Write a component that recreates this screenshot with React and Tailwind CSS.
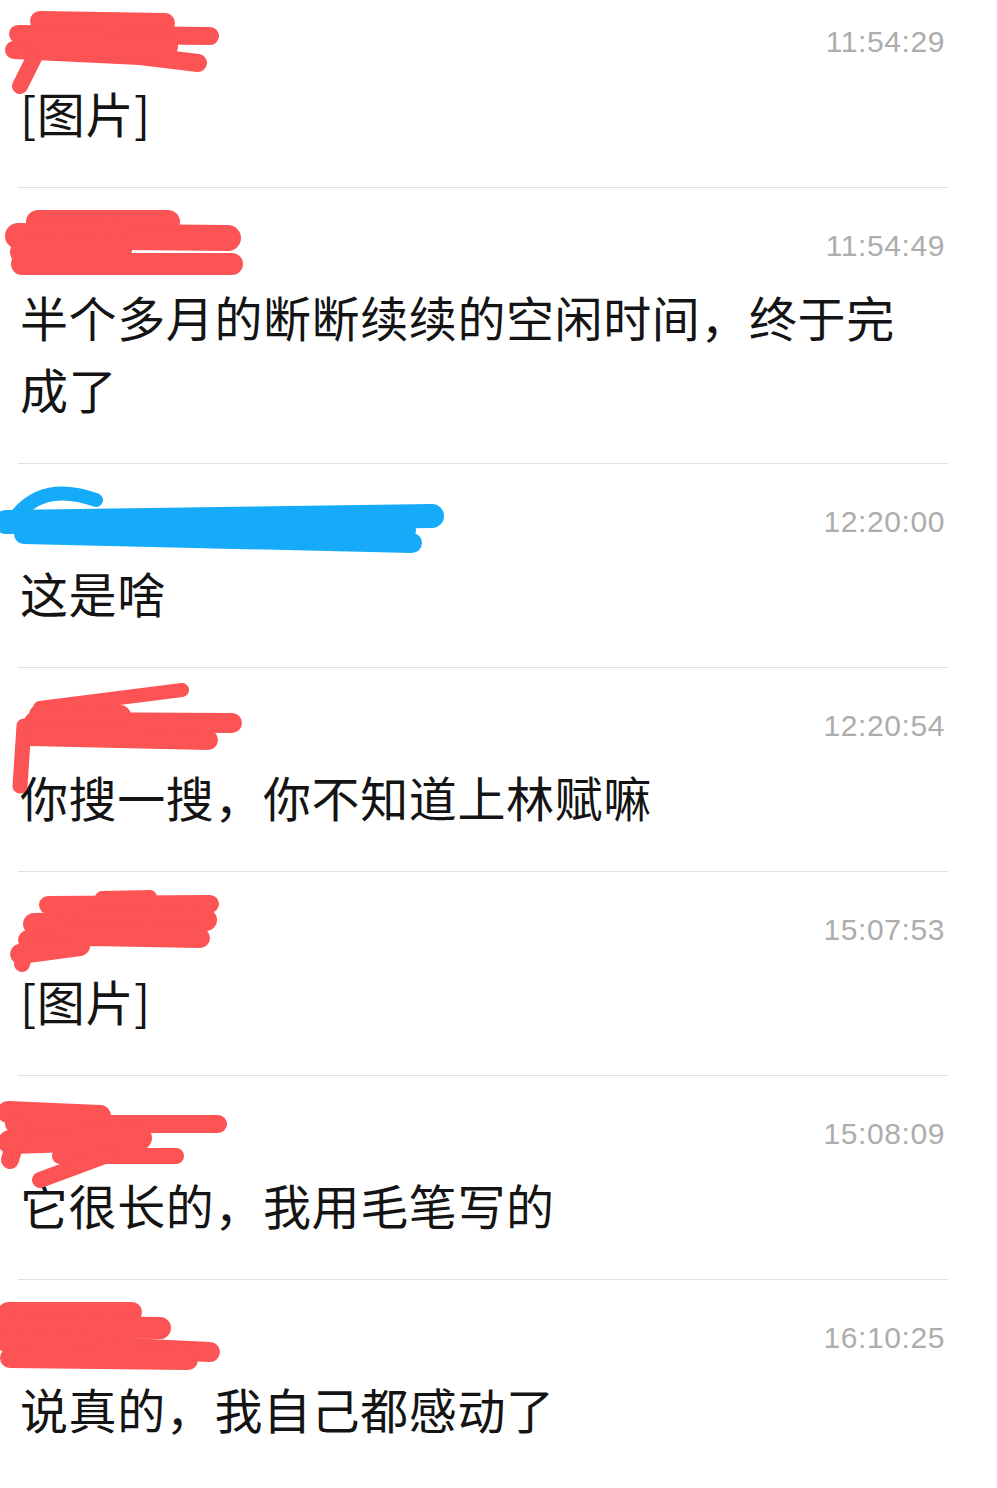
const RED = '#fc5354';
const BLUE = '#16abf8';

// scribbles over the sender names, coordinates are relative to the row top
const scribbles = [
  {
    color: RED,
    strokes: [
      ['M40 37 L165 39', 20],
      ['M18 50 L210 52', 18],
      ['M14 66 L140 72 L198 79', 18],
      ['M40 60 L165 62', 26],
      ['M34 74 L20 102', 16],
    ],
  },
  {
    color: RED,
    strokes: [
      ['M38 34 L168 34', 24],
      ['M18 48 L228 50', 26],
      ['M22 64 L120 62', 24],
      ['M22 76 L232 76', 22],
    ],
  },
  {
    color: BLUE,
    strokes: [
      ['M18 50 Q45 18 96 36', 14],
      ['M6 58 L432 52', 24],
      ['M24 70 L412 79', 20],
      ['M110 64 L405 66', 22],
    ],
  },
  {
    color: RED,
    strokes: [
      ['M40 40 L182 22', 14],
      ['M34 54 L232 55', 20],
      ['M30 68 L208 72', 20],
      ['M40 47 L120 48', 22],
      ['M24 58 L20 118', 15],
    ],
  },
  {
    color: RED,
    strokes: [
      ['M48 33 L210 32', 18],
      ['M102 26 L150 25', 14],
      ['M34 52 L206 48', 22],
      ['M28 68 L90 64 L200 66', 20],
      ['M20 82 L80 74', 20],
      ['M22 92 L28 70', 16],
    ],
  },
  {
    color: RED,
    strokes: [
      ['M8 36 L100 40', 22],
      ['M14 48 L218 48', 18],
      ['M10 66 L140 62', 24],
      ['M10 84 L20 50', 18],
      ['M60 80 L176 80', 16],
      ['M40 104 L110 78', 16],
    ],
  },
  {
    color: RED,
    strokes: [
      ['M8 32 L132 32', 20],
      ['M6 46 L160 48', 22],
      ['M6 62 L210 72', 20],
      ['M10 78 L188 80', 20],
    ],
  },
];

const messages = [
  { time: '11:54:29', text: '[图片]' },
  { time: '11:54:49', text: '半个多月的断断续续的空闲时间，终于完成了' },
  { time: '12:20:00', text: '这是啥' },
  { time: '12:20:54', text: '你搜一搜，你不知道上林赋嘛' },
  { time: '15:07:53', text: '[图片]' },
  { time: '15:08:09', text: '它很长的，我用毛笔写的' },
  { time: '16:10:25', text: '说真的，我自己都感动了' },
];

function Scribble({ data }) {
  return (
    <svg
      className="absolute left-[-18px] top-0 pointer-events-none"
      width="460"
      height="130"
      viewBox="0 0 460 130"
    >
      {data.strokes.map(([d, w], i) => (
        <path
          key={i}
          d={d}
          fill="none"
          stroke={data.color}
          strokeWidth={w}
          strokeLinecap="round"
          strokeLinejoin="round"
        />
      ))}
    </svg>
  );
}

function MessageRow({ msg, scribble, last }) {
  return (
    <div
      className={
        last
          ? 'relative pt-[40px] pb-[40px]'
          : 'relative border-b border-[#e0e0e0] pt-[40px] pb-[39px]'
      }
    >
      <div className="flex h-[36px] items-center justify-end pr-[3px]">
        <span
          className="text-[30px] leading-[36px] tracking-[0.6px] text-[#adadad]"
          style={{ fontFamily: '"Liberation Sans", Arial, sans-serif' }}
        >
          {msg.time}
        </span>
      </div>
      <p
        className="mt-[16px] max-w-[905px] pl-[2px] text-[48px] leading-[72px] tracking-[0.6px] text-[#141414]"
        style={{ fontFamily: '"Noto Sans CJK SC", "Noto Sans", sans-serif' }}
      >
        {msg.text}
      </p>
      <Scribble data={scribble} />
    </div>
  );
}

export default function App() {
  return (
    <div className="min-h-[1488px] w-[997px] overflow-hidden bg-white">
      <div className="ml-[18px] mt-[-16px] w-[930px]">
        {messages.map((m, i) => (
          <MessageRow
            key={m.time}
            msg={m}
            scribble={scribbles[i]}
            last={i === messages.length - 1}
          />
        ))}
      </div>
    </div>
  );
}
